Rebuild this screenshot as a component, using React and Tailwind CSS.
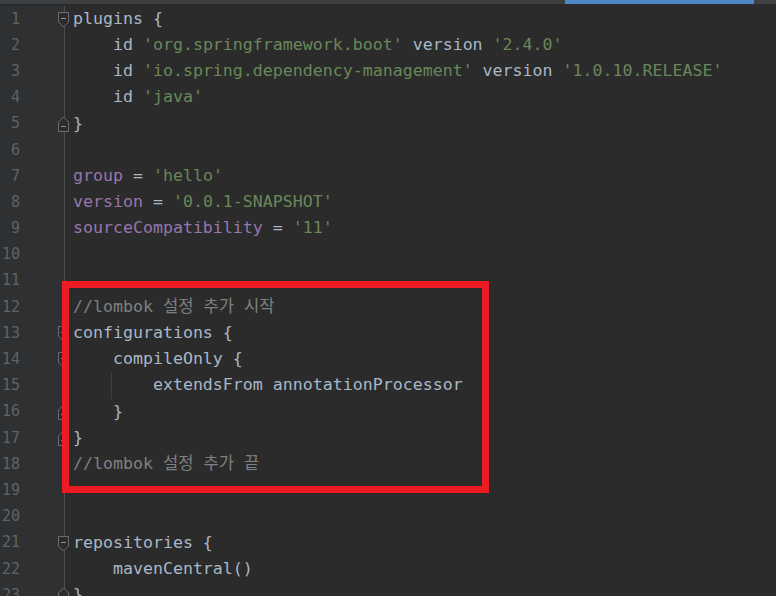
import React from "react";

const T = "text-[#a9b7c6]";
const S = "text-[#6a8759]";
const P = "text-[#9876aa]";
const C = "text-[#808080]";

const lines = [
  { fold: "down", t: [[T, "plugins {"]] },
  { t: [[T, "    id "], [S, "'org.springframework.boot'"], [T, " version "], [S, "'2.4.0'"]] },
  { t: [[T, "    id "], [S, "'io.spring.dependency-management'"], [T, " version "], [S, "'1.0.10.RELEASE'"]] },
  { t: [[T, "    id "], [S, "'java'"]] },
  { fold: "up", t: [[T, "}"]] },
  { t: [] },
  { t: [[P, "group"], [T, " = "], [S, "'hello'"]] },
  { t: [[P, "version"], [T, " = "], [S, "'0.0.1-SNAPSHOT'"]] },
  { t: [[P, "sourceCompatibility"], [T, " = "], [S, "'11'"]] },
  { t: [] },
  { t: [] },
  { t: [[C, "//lombok 설정 추가 시작"]] },
  { fold: "down", t: [[T, "configurations {"]] },
  { fold: "down", t: [[T, "    compileOnly {"]] },
  { guide: true, t: [[T, "        extendsFrom annotationProcessor"]] },
  { fold: "up", t: [[T, "    }"]] },
  { fold: "up", t: [[T, "}"]] },
  { t: [[C, "//lombok 설정 추가 끝"]] },
  { t: [] },
  { t: [] },
  { fold: "down", t: [[T, "repositories {"]] },
  { t: [[T, "    mavenCentral()"]] },
  { fold: "up", t: [[T, "}"]] },
];

function Fold({ dir }) {
  if (dir === "down") {
    return (
      <svg width="11" height="16" viewBox="0 0 11 16" className="absolute left-[58px] top-[6px]">
        <path d="M0.5 0.5 H10.5 V10 L5.5 15 L0.5 10 Z" fill="#2b2b2b" stroke="#6b6e70" strokeWidth="1" />
        <path d="M3 6.5 H8" stroke="#8a8d90" strokeWidth="1" />
      </svg>
    );
  }
  return (
    <svg width="11" height="16" viewBox="0 0 11 16" className="absolute left-[58px] top-[5px]">
      <path d="M0.5 15.5 H10.5 V6 L5.5 1 L0.5 6 Z" fill="#2b2b2b" stroke="#6b6e70" strokeWidth="1" />
      <path d="M3 10.5 H8" stroke="#8a8d90" strokeWidth="1" />
    </svg>
  );
}

export default function App() {
  return (
    <div
      className="relative w-[776px] h-[596px] overflow-hidden bg-[#2b2b2b]"
      style={{ fontFamily: "'DejaVu Sans Mono', 'Noto Sans CJK KR', monospace" }}
    >
      <div className="flex h-[4px] w-full">
        <div className="w-[565px] bg-[#3c3f41]" />
        <div className="w-[189px] bg-[#4a88c7]" />
        <div className="flex-1 bg-[#3e4244]" />
      </div>
      <div className="flex pt-[2px]">
        <div className="w-[65px] shrink-0 border-r border-[#4b4d4f] bg-[#2e3032]">
          {lines.map((l, i) => (
            <div key={i} className="relative h-[26.2px] flex items-center">
              <span className="w-[20px] text-right text-[15px] leading-none text-[#606366]">{i + 1}</span>
              {l.fold && <Fold dir={l.fold} />}
            </div>
          ))}
        </div>
        <div className="flex-1 pl-[8px]">
          {lines.map((l, i) => (
            <div key={i} className="relative h-[26.2px] flex items-center whitespace-pre text-[16.6px] leading-none">
              {l.guide && <div className="absolute left-[38px] top-0 h-full w-px bg-[#3d3f41]" />}
              {l.t.map(([cls, txt], j) => (
                <span key={j} className={cls}>{txt}</span>
              ))}
            </div>
          ))}
        </div>
      </div>
      <div className="absolute left-[62px] top-[281px] w-[427px] h-[212px] border-[7px] border-[#ed1c24]" />
    </div>
  );
}
